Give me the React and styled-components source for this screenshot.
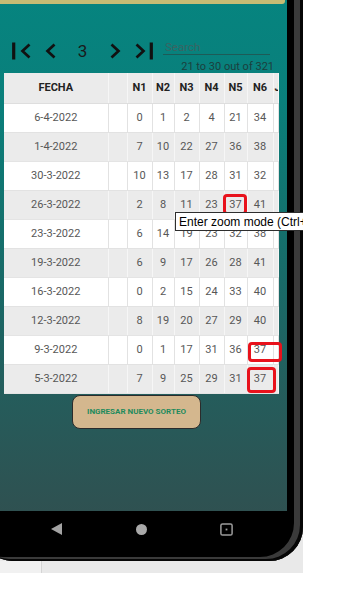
import React from "react";
import styled, { createGlobalStyle, css } from "styled-components";

const Global = createGlobalStyle`
  html, body { margin: 0; padding: 0; background: #ffffff; }
  body { font-family: Roboto, "Liberation Sans", Arial, sans-serif; }
  * { box-sizing: border-box; }
`;

const Page = styled.div`
  width: 348px;
  height: 606px;
  background: #ffffff;
  overflow: hidden;
`;

const Device = styled.div`
  position: relative;
  width: 303px;
  height: 573px;
  background: #e9e9e9;
  overflow: hidden;
  display: flex;
  flex-direction: column;
`;

const Frame = styled.div`
  flex: none;
  margin-left: -16px;
  width: 319px;
  height: 561px;
  padding: 0 16px;
  background: #000;
  border-radius: 0 0 34px 28px;
  box-shadow: inset -3px -2px 0 0 #060606, inset -9px -4px 0 0 #3a3a3a;
  display: flex;
  flex-direction: column;
`;

const Screen = styled.div`
  flex: none;
  width: 287px;
  height: 511px;
  background: linear-gradient(
    180deg,
    #06847f 0%,
    #0a7f7b 20%,
    #12736f 40%,
    #1b6765 60%,
    #255c5b 78%,
    #2f5151 100%
  );
  display: flex;
  flex-direction: column;
`;

const TopBar = styled.div`
  width: 285px;
  height: 4px;
  background: #c6bc74;
  border-bottom-right-radius: 3px;
`;

const Pager = styled.div`
  display: flex;
  align-items: center;
  height: 20px;
  margin-top: 37px;
  padding-left: 6px;
`;

const PagerButton = styled.button`
  width: ${(p) => p.$w}px;
  height: 20px;
  padding: 0;
  border: 0;
  background: none;
  display: flex;
  align-items: center;
  justify-content: center;
  color: #111;
`;

const PageNumber = styled.span`
  width: 37px;
  text-align: center;
  font-size: 17px;
  line-height: 20px;
  color: #1a1a1a;
`;

const SearchInput = styled.input`
  align-self: flex-start;
  margin: -1px 0 0 4px;
  width: 107px;
  height: 15px;
  padding: 0 2px;
  border: 0;
  border-bottom: 1px solid #1d5b57;
  background: transparent;
  font-family: Roboto, "Liberation Sans", sans-serif;
  font-size: 11.5px;
  line-height: 14px;
  color: #12332f;
  outline: none;
  &::placeholder {
    color: #3a6462;
  }
`;

const Count = styled.div`
  font-size: 11px;
  line-height: 11px;
  color: #1b3f3d;
  text-align: right;
  padding-right: 13px;
`;

const TableWrap = styled.div`
  margin: 1px 0 0 4px;
  width: 274px;
`;

const Table = styled.table`
  width: 274px;
  table-layout: fixed;
  border-collapse: collapse;
  background: #fff;
`;

const HeadCell = styled.th`
  height: 30px;
  padding: 0;
  background: #ebebeb;
  border-right: 1px solid #f6f6f6;
  border-bottom: 1px solid #dedede;
  font-size: 11px;
  font-weight: 700;
  color: #222;
  text-align: ${(p) => (p.$left ? "left" : "center")};
  padding-left: ${(p) => (p.$left ? "1px" : "0")};
  overflow: hidden;
  white-space: nowrap;
`;

const Row = styled.tr`
  background: ${(p) => (p.$shade ? "#ebebeb" : "#ffffff")};
`;

const Cell = styled.td`
  position: relative;
  height: 29px;
  padding: 0;
  border-right: 1px solid ${(p) => (p.$shade ? "#f6f6f6" : "#e2e2e2")};
  border-bottom: 1px solid ${(p) => (p.$shade ? "#e4e4e4" : "#e2e2e2")};
  font-size: 11px;
  color: #575757;
  text-align: center;
  white-space: nowrap;
  overflow: ${(p) => (p.$clip ? "hidden" : "visible")};
  ${(p) =>
    p.$mark &&
    css`
      &::after {
        content: "";
        position: absolute;
        top: ${p.$mark.t}px;
        right: ${p.$mark.r}px;
        bottom: ${p.$mark.b}px;
        left: ${p.$mark.l}px;
        border: 3px solid #e8121c;
        border-radius: 4px;
        pointer-events: none;
      }
    `}
`;

const NewDrawButton = styled.button`
  margin: 1px 0 0 72px;
  width: 129px;
  height: 34px;
  border: 1px solid #2b2b2b;
  border-radius: 8px;
  background: #d4b78e;
  color: #1f8b5d;
  font-family: Roboto, "Liberation Sans", sans-serif;
  font-size: 8px;
  font-weight: 700;
  padding: 0;
`;

const NavBar = styled.div`
  display: grid;
  grid-template-columns: 85px 85px 85px;
  align-items: center;
  justify-items: center;
  height: 36px;
  padding-left: 14px;
`;

const NavDot = styled.span`
  width: 11px;
  height: 11px;
  border-radius: 50%;
  background: #a9a9a9;
`;

const Strip = styled.div`
  display: flex;
  height: 12px;
  flex: none;
`;

const StripEdge = styled.div`
  width: 42px;
  background: #f1f1f1;
  border-right: 1px solid #d4d4d4;
`;

const StripRest = styled.div`
  flex: 1;
  background: #e9e9e9;
`;

const Tooltip = styled.div`
  position: absolute;
  left: 175px;
  top: 212px;
  z-index: 5;
  padding: 1px 3px 0;
  border: 1px solid #2e2e2e;
  background: #ffffff;
  font-family: "Liberation Sans", Arial, sans-serif;
  font-size: 12px;
  line-height: 16px;
  color: #000;
  white-space: nowrap;
`;

const stroke = { stroke: "#111", strokeWidth: 2.7, fill: "none", strokeLinejoin: "miter" };

const FirstIcon = () => (
  <svg width="19" height="18" viewBox="0 0 19 18">
    <line x1="1.7" y1="0.5" x2="1.7" y2="17.5" stroke="#111" strokeWidth="3.2" />
    <polyline points="17.5,2.5 10.5,9 17.5,15.5" {...stroke} />
  </svg>
);
const PrevIcon = () => (
  <svg width="11" height="18" viewBox="0 0 11 18">
    <polyline points="9.5,2.5 2.5,9 9.5,15.5" {...stroke} />
  </svg>
);
const NextIcon = () => (
  <svg width="11" height="18" viewBox="0 0 11 18">
    <polyline points="1.5,2.5 8.5,9 1.5,15.5" {...stroke} />
  </svg>
);
const LastIcon = () => (
  <svg width="19" height="18" viewBox="0 0 19 18">
    <polyline points="1.5,2.5 8.5,9 1.5,15.5" {...stroke} />
    <line x1="16.3" y1="0.5" x2="16.3" y2="17.5" stroke="#111" strokeWidth="3.2" />
  </svg>
);

const BackIcon = () => (
  <svg width="11" height="12" viewBox="0 0 11 12">
    <polygon points="11,0 11,12 0,6" fill="#a3a3a3" />
  </svg>
);
const RecentIcon = () => (
  <svg width="13" height="13" viewBox="0 0 13 13">
    <rect x="0.9" y="0.9" width="11.2" height="11.2" rx="1.6" fill="none" stroke="#9c9c9c" strokeWidth="1.5" />
    <rect x="5.6" y="5.6" width="1.8" height="1.8" fill="#9c9c9c" />
  </svg>
);

const columns = [104, 19, 25, 22, 25, 25, 23, 26, 5];
const headers = ["FECHA", "", "N1", "N2", "N3", "N4", "N5", "N6", "JOKER"];

const rows = [
  ["6-4-2022", 0, 1, 2, 4, 21, 34],
  ["1-4-2022", 7, 10, 22, 27, 36, 38],
  ["30-3-2022", 10, 13, 17, 28, 31, 32],
  ["26-3-2022", 2, 8, 11, 23, 37, 41],
  ["23-3-2022", 6, 14, 19, 23, 32, 38],
  ["19-3-2022", 6, 9, 17, 26, 28, 41],
  ["16-3-2022", 0, 2, 15, 24, 33, 40],
  ["12-3-2022", 8, 19, 20, 27, 29, 40],
  ["9-3-2022", 0, 1, 17, 31, 36, 37],
  ["5-3-2022", 7, 9, 25, 29, 31, 37],
];

// annotation boxes: row index -> { number index, offsets }
const marks = {
  3: { col: 4, box: { t: 3, r: 0, b: 4, l: -2 } },
  8: { col: 5, box: { t: 6, r: -9, b: 2, l: 0 } },
  9: { col: 5, box: { t: 2, r: -3, b: 0, l: -1 } },
};

export default function App() {
  return (
    <Page>
      <Global />
      <Device>
        <Frame>
          <Screen>
            <TopBar />
            <Pager>
              <PagerButton $w={31} aria-label="Primera página"><FirstIcon /></PagerButton>
              <PagerButton $w={27} aria-label="Anterior"><PrevIcon /></PagerButton>
              <PageNumber>3</PageNumber>
              <PagerButton $w={28} aria-label="Siguiente"><NextIcon /></PagerButton>
              <PagerButton $w={30} aria-label="Última página"><LastIcon /></PagerButton>
              <SearchInput placeholder="Search" />
            </Pager>
            <Count>21 to 30 out of 321</Count>
            <TableWrap>
              <Table>
                <colgroup>
                  {columns.map((w, i) => (
                    <col key={i} style={{ width: w }} />
                  ))}
                </colgroup>
                <thead>
                  <tr>
                    {headers.map((h, i) => (
                      <HeadCell key={i} $left={i === headers.length - 1}>{h}</HeadCell>
                    ))}
                  </tr>
                </thead>
                <tbody>
                  {rows.map((r, ri) => {
                    const shade = ri % 2 === 1;
                    const mark = marks[ri];
                    return (
                      <Row key={ri} $shade={shade}>
                        <Cell $shade={shade}>{r[0]}</Cell>
                        <Cell $shade={shade} />
                        {r.slice(1).map((n, ni) => (
                          <Cell
                            key={ni}
                            $shade={shade}
                            $mark={mark && mark.col === ni ? mark.box : null}
                          >
                            {n}
                          </Cell>
                        ))}
                        <Cell $shade={shade} $clip />
                      </Row>
                    );
                  })}
                </tbody>
              </Table>
            </TableWrap>
            <NewDrawButton>INGRESAR NUEVO SORTEO</NewDrawButton>
          </Screen>
          <NavBar>
            <BackIcon />
            <NavDot />
            <RecentIcon />
          </NavBar>
        </Frame>
        <Strip>
          <StripEdge />
          <StripRest />
        </Strip>
        <Tooltip>Enter zoom mode (Ctrl+Shift+Z)</Tooltip>
      </Device>
    </Page>
  );
}
